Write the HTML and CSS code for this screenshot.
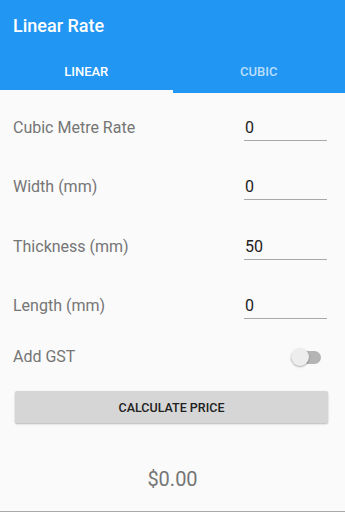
FILE: index.html
```html
<!DOCTYPE html>
<html>
<head>
<meta charset="utf-8">
<link rel="stylesheet" href="styles.css">
</head>
<body>
<div class="app">
  <header class="appbar">
    <div class="title">Linear Rate</div>
    <nav class="tabs">
      <div class="tab active">LINEAR</div>
      <div class="tab">CUBIC</div>
    </nav>
  </header>
  <main class="form">
    <div class="row">
      <span class="label">Cubic Metre Rate</span>
      <span class="field">0</span>
    </div>
    <div class="row">
      <span class="label">Width (mm)</span>
      <span class="field">0</span>
    </div>
    <div class="row">
      <span class="label">Thickness (mm)</span>
      <span class="field">50</span>
    </div>
    <div class="row">
      <span class="label">Length (mm)</span>
      <span class="field">0</span>
    </div>
    <div class="switch-row">
      <span class="label">Add GST</span>
      <span class="switch"><span class="track"></span><span class="thumb"></span></span>
    </div>
    <button class="calc">CALCULATE PRICE</button>
    <div class="result">$0.00</div>
  </main>
  <div class="bottom-line"></div>
</div>
</body>
</html>
```

FILE: styles.css
```css
html, body {
  margin: 0;
  padding: 0;
}
body {
  background: #fafafa;
  font-family: Roboto, "Noto Sans", sans-serif;
}
.app {
  width: 345px;
  height: 512px;
  display: flex;
  flex-direction: column;
  overflow: hidden;
}
.appbar {
  background: #2196f3;
  color: #fff;
}
.title {
  height: 50px;
  display: flex;
  align-items: center;
  padding-left: 13px;
  font-size: 18px;
  font-weight: 500;
}
.tabs {
  display: flex;
  height: 43px;
}
.tab {
  flex: 1;
  display: flex;
  align-items: center;
  justify-content: center;
  font-size: 13px;
  font-weight: 500;
  color: rgba(255, 255, 255, 0.7);
}
.tab.active {
  color: #fff;
  box-shadow: inset 0 -3px 0 #fafafa;
}
.form {
  display: flex;
  flex-direction: column;
  padding-top: 25px;
}
.row {
  height: 59.3px;
  box-sizing: border-box;
  display: flex;
  align-items: baseline;
  justify-content: space-between;
  padding: 0 18px 0 13px;
}
.row:first-child {
  height: 35.3px;
}
.row + .row {
  padding-top: 24px;
}
.label {
  font-size: 16px;
  line-height: 20px;
  color: #757575;
}
.field {
  width: 83px;
  font-size: 16px;
  line-height: 20px;
  padding-bottom: 2px;
  border-bottom: 1px solid #a8a8a8;
  color: #212121;
  padding-left: 1px;
  box-sizing: border-box;
}
.switch-row {
  height: 50px;
  margin-top: 1px;
  display: flex;
  align-items: center;
  justify-content: space-between;
  padding: 0 24px 0 13px;
}
.switch {
  position: relative;
  width: 30px;
  height: 18px;
}
.track {
  position: absolute;
  left: 0;
  top: 3px;
  width: 30px;
  height: 12.5px;
  border-radius: 7px;
  background: #b4b4b4;
}
.thumb {
  position: absolute;
  left: 0;
  top: 0;
  width: 18px;
  height: 18px;
  border-radius: 50%;
  background: #ededed;
  box-shadow: 0 1px 2px rgba(0, 0, 0, 0.3);
}
.calc {
  margin: 9px 17px 0 15px;
  height: 32px;
  border: none;
  border-radius: 2px;
  background: #d6d6d6;
  box-shadow: 0 1px 2px rgba(0, 0, 0, 0.28);
  font-family: Roboto, "Noto Sans", sans-serif;
  font-size: 12.5px;
  font-weight: 500;
  color: #212121;
  padding: 0;
}
.result {
  margin-top: 44px;
  text-align: center;
  font-size: 20px;
  line-height: 24px;
  color: #757575;
}
.bottom-line {
  margin-top: auto;
  height: 1.5px;
  background: #a9a9a9;
}
```
